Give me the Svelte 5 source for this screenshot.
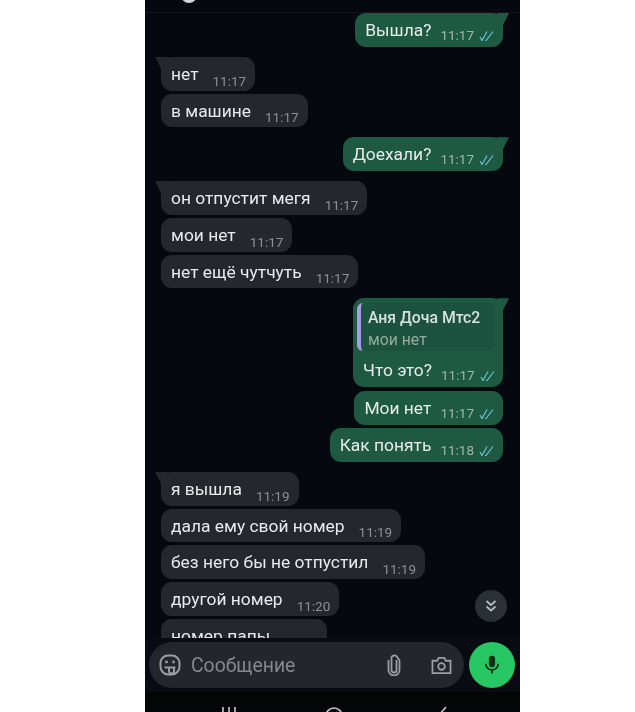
<script lang="ts">
  type Msg = { out?: boolean; text: string; time: string; tail?: boolean; group?: boolean };

  const messages: Msg[] = [
    { out: true, text: "Вышла?", time: "11:17", tail: true },
    { text: "нет", time: "11:17", tail: true, group: true },
    { text: "в машине", time: "11:17" },
    { out: true, text: "Доехали?", time: "11:17", tail: true, group: true },
    { text: "он отпустит мегя", time: "11:17", tail: true, group: true },
    { text: "мои нет", time: "11:17" },
    { text: "нет ещё чутчуть", time: "11:17" },
  ];

  const after: Msg[] = [
    { out: true, text: "Мои нет", time: "11:17" },
    { out: true, text: "Как понять", time: "11:18" },
    { text: "я вышла", time: "11:19", tail: true, group: true },
    { text: "дала ему свой номер", time: "11:19" },
    { text: "без него бы не отпустил", time: "11:19" },
    { text: "другой номер", time: "11:20" },
    { text: "номер папы", time: "11:20" },
  ];
</script>

{#snippet ticks()}
  <svg class="ticks" viewBox="0 0 16 10" width="16" height="10" fill="none" stroke="#6cc0d2" stroke-width="1.200">
    <path d="M1 6l2 3.500 5-9" />
    <path d="M6 9.500l1 0 7-9" />
  </svg>
{/snippet}

{#snippet bubble(m: Msg)}
  <div class="row" class:out={m.out} class:group={m.group}>
    <div class="bubble" class:tail={m.tail}>
      <span class="text">{m.text}</span>
      <span class="meta">
        <span class="time">{m.time}</span>
        {#if m.out}{@render ticks()}{/if}
      </span>
    </div>
  </div>
{/snippet}

<div class="phone">
  <div class="topbar"><span class="avatar-edge"></span></div>
  <div class="chat">
    {#each messages as m}
      {@render bubble(m)}
    {/each}

    <div class="row out group">
      <div class="bubble tail reply">
        <div class="quote">
          <span class="quote-name">Аня Доча Мтс2</span>
          <span class="quote-text">мои нет</span>
        </div>
        <div class="reply-line">
          <span class="text">Что это?</span>
          <span class="meta">
            <span class="time">11:17</span>
            {@render ticks()}
          </span>
        </div>
      </div>
    </div>

    {#each after as m}
      {@render bubble(m)}
    {/each}
  </div>

  <button class="scroll-down" aria-label="Вниз">
    <svg viewBox="0 0 16 16" width="16" height="16" fill="none" stroke="#b9bdc2" stroke-width="1.700">
      <path d="M3.500 3l4.500 4 4.500-4" />
      <path d="M3.500 8.500l4.500 4 4.500-4" />
    </svg>
  </button>

  <div class="composer">
    <div class="input">
      <svg class="sticker" viewBox="0 0 22 22" width="22" height="22" fill="none" stroke="#9a9da3" stroke-width="2">
        <path d="M13 20.500H9A8 8 0 0 1 1.500 12.500V9A7.500 7.500 0 0 1 9 1.500h4A7.500 7.500 0 0 1 20.500 9v3.500A8 8 0 0 1 13 20.500z" />
        <path d="M5.500 13.500h11" />
        <path d="M10 13.500v3.500a2.500 2.500 0 0 0 5 0v-3.500" />
        <circle cx="7.500" cy="8" r="1.400" fill="#9a9da3" stroke="none" />
        <circle cx="14.500" cy="8" r="1.400" fill="#9a9da3" stroke="none" />
      </svg>
      <span class="placeholder">Сообщение</span>
      <svg class="clip" viewBox="0 0 14 22" width="14" height="22" fill="none" stroke="#9a9da3" stroke-width="1.800">
        <path d="M9.500 6v10a2.500 2.500 0 0 1-5 0V5a3 3 0 0 1 6-1 4 4 0 0 1 2 3v9a5.500 5.500 0 0 1-11 0V6" />
      </svg>
      <svg class="camera" viewBox="0 0 22 20" width="21" height="19" fill="none" stroke="#9a9da3" stroke-width="1.900">
        <path d="M1.500 5h5l1.500-3h6l1.500 3h5v13h-19z" />
        <circle cx="11" cy="11" r="3.500" />
      </svg>
    </div>
    <button class="mic" aria-label="Голосовое">
      <svg viewBox="0 0 18 24" width="16" height="22" fill="none" stroke="#0b3219">
        <rect x="5.500" y="1.500" width="7" height="13" rx="3.500" fill="#0b3219" stroke="none" />
        <path d="M2 10.500a7 7 0 0 0 14 0M9 17.500v4" stroke-width="2" />
      </svg>
    </button>
  </div>

  <div class="navbar">
    <svg viewBox="0 0 375 20" width="375" height="20" fill="none" stroke="#c9cacc" stroke-width="1.600">
      <path d="M78 15v8M84 15v8M90 15v8" />
      <circle cx="189" cy="24" r="8" />
      <path d="M301 15l-7 8" />
    </svg>
  </div>
</div>

<style>
  :global(body) {
    background: #fff;
  }

  .phone {
    position: relative;
    width: 375px;
    height: 712px;
    margin-left: 145px;
    background: #05080f;
    overflow: hidden;
    font-family: Roboto, "Liberation Sans", sans-serif;
    display: flex;
    flex-direction: column;
    filter: blur(0.4px);
  }

  .topbar {
    position: absolute;
    top: 0;
    left: 0;
    right: 0;
    height: 12px;
    border-bottom: 1px solid #10141b;
  }

  .avatar-edge {
    position: absolute;
    left: 36px;
    top: -13px;
    width: 16px;
    height: 16px;
    border-radius: 50%;
    background: #d5d6d8;
  }

  .chat {
    height: 625px;
    margin-top: 13px;
    padding: 0 17px 0 16px;
    display: flex;
    flex-direction: column;
    gap: 3px;
    overflow: hidden;
    flex: none;
  }

  .row {
    display: flex;
    flex: none;
  }

  .row.group {
    margin-top: 7px;
  }

  .row.out {
    justify-content: flex-end;
  }

  .bubble {
    position: relative;
    display: flex;
    height: 33.750px;
    box-sizing: border-box;
    padding: 0 9px 0 10px;
    background: #25272e;
    border-radius: 11px;
    color: #e9eaec;
  }

  .row.out .bubble {
    background: #1e5a41;
    padding-right: 8px;
  }

  .bubble.tail::before {
    content: "";
    position: absolute;
    top: 0;
    left: -6px;
    width: 12px;
    height: 12px;
    background: inherit;
    clip-path: polygon(0 0, 100% 0, 100% 100%, 50% 100%);
  }

  .row.out .bubble.tail::before {
    left: auto;
    right: -6px;
    clip-path: polygon(0 0, 100% 0, 50% 100%, 0 100%);
  }

  .text {
    font-size: 17.400px;
    line-height: 35px;
    white-space: nowrap;
  }

  .row.out .text {
    line-height: 34px;
  }

  .meta {
    display: flex;
    align-items: center;
    gap: 5px;
    margin-left: 14px;
    padding-top: 13px;
    height: 23px;
  }

  .row.out .meta {
    margin-left: 9px;
    padding-top: 11px;
  }

  .time {
    font-size: 13.500px;
    color: #8c8f94;
    line-height: 1;
  }

  .row.out .time {
    color: #9fb7ab;
  }

  .ticks {
    display: block;
  }

  .bubble.reply {
    flex-direction: column;
    height: 88.500px;
    width: 150px;
    margin-bottom: 1.500px;
    padding: 5px 4px 0 4px;
  }

  .quote {
    display: flex;
    flex-direction: column;
    height: 48px;
    box-sizing: border-box;
    padding: 5px 0 0 7px;
    background: #1c5340;
    border-radius: 6px;
    border-left: 4px solid #a99be8;
  }

  .quote-name {
    font-size: 15.800px;
    line-height: 20px;
    font-weight: 500;
    color: #d8e2dc;
  }

  .quote-text {
    font-size: 15.800px;
    line-height: 23px;
    color: #93ab9f;
  }

  .reply-line {
    display: flex;
    padding-left: 6px;
    margin-top: 2px;
  }

  .scroll-down {
    position: absolute;
    left: 330px;
    top: 590px;
    width: 32px;
    height: 32px;
    padding: 8px;
    border: none;
    border-radius: 50%;
    background: #2b2f36;
  }

  .scroll-down svg,
  .mic svg {
    display: block;
  }

  .composer {
    display: flex;
    align-items: center;
    gap: 5px;
    height: 54px;
    padding: 0 5px 0 4px;
    background: #080b12;
    flex: none;
  }

  .input {
    flex: 1;
    display: flex;
    align-items: center;
    height: 46px;
    padding: 0 12px 0 10px;
    border-radius: 23px;
    background: #23262d;
  }

  .placeholder {
    flex: 1;
    margin-left: 10px;
    font-size: 19.400px;
    color: #85888e;
  }

  .camera {
    margin-left: 30px;
  }

  .mic {
    width: 46px;
    height: 46px;
    padding: 12px 15px;
    border: none;
    border-radius: 50%;
    background: #27c763;
    flex: none;
  }

  .navbar {
    height: 20px;
    background: #040507;
    flex: none;
  }

  .navbar svg {
    display: block;
  }
</style>
